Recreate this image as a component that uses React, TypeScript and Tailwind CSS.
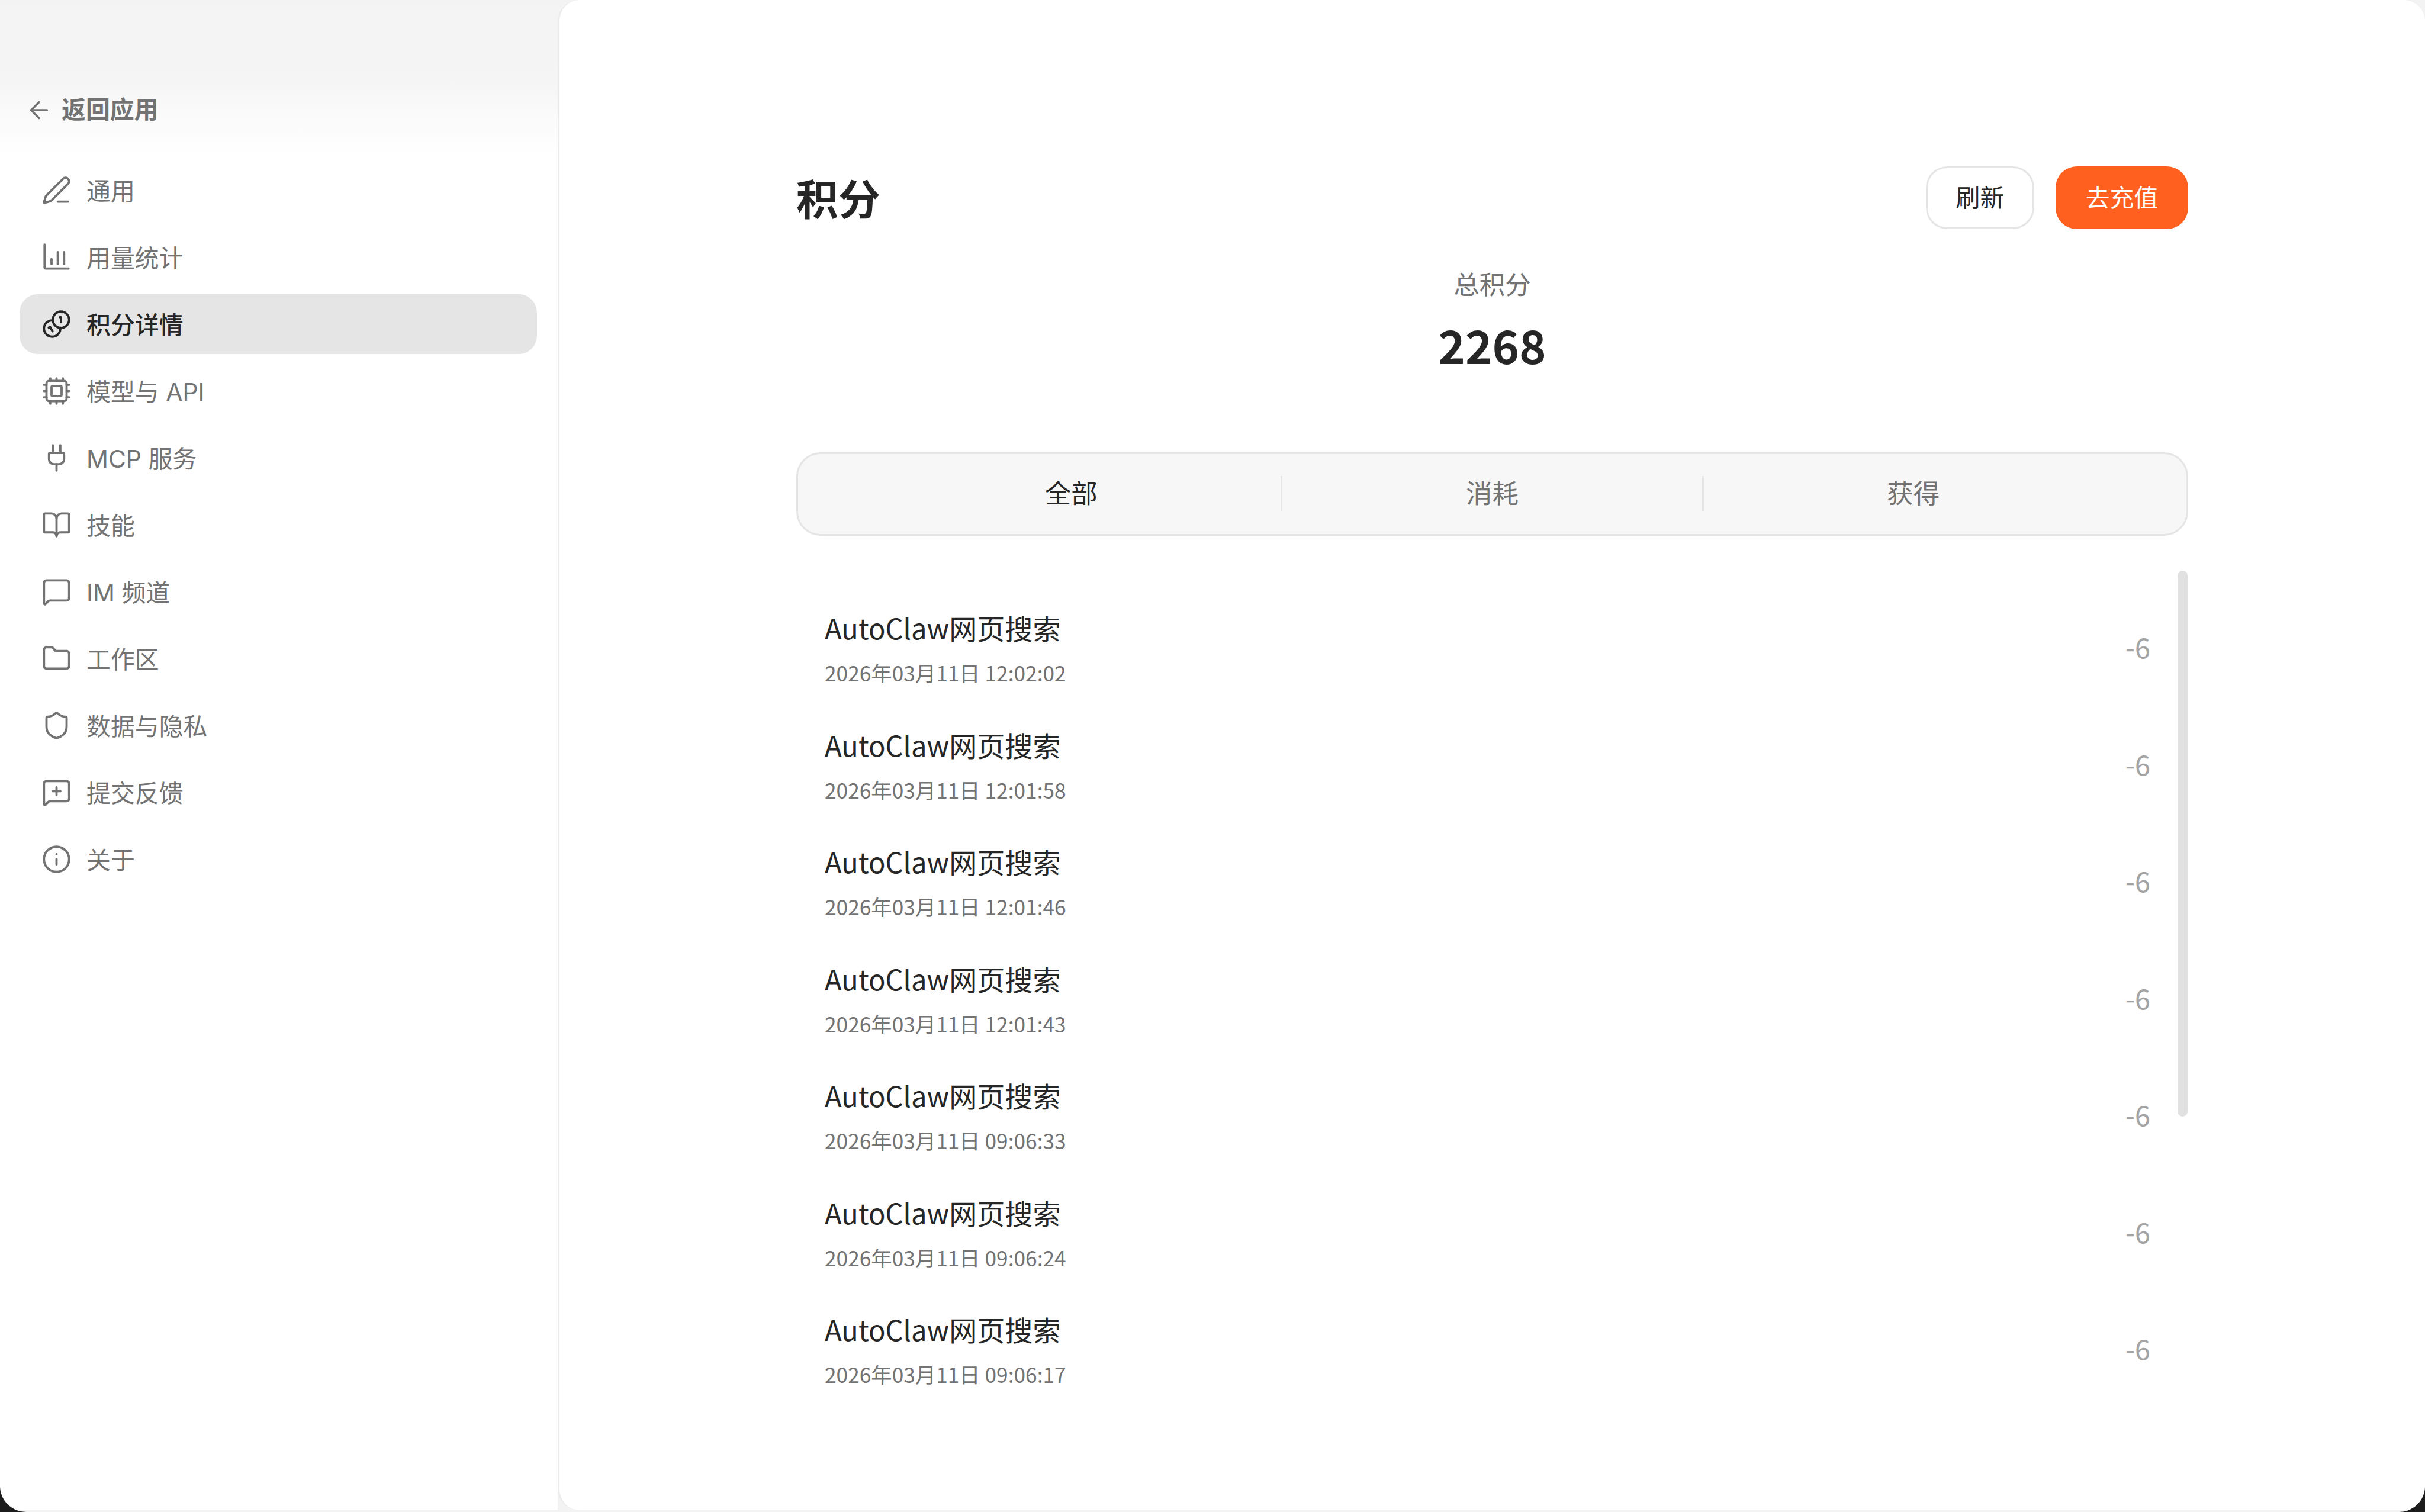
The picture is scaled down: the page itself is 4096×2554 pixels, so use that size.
import React from "react";
import { ArrowLeft, PenLine, Cpu, Plug, BookOpen, MessageSquare, Folder, Shield, MessageSquarePlus, Info } from "lucide-react";

type IconProps = { className?: string; strokeWidth?: number };

function UsageIcon({ className, strokeWidth }: IconProps) {
  return (
    <svg className={className} viewBox="0 0 24 24" fill="none" stroke="currentColor" strokeWidth={strokeWidth} strokeLinecap="round" strokeLinejoin="round">
      <path d="M2.5 2v18a1 1 0 0 0 1 1h18" />
      <path d="M8 17.5v-4" />
      <path d="M13 17.5V8" />
      <path d="M18 17.5V8" />
    </svg>
  );
}

function CoinsIcon({ className, strokeWidth }: IconProps) {
  return (
    <svg className={className} viewBox="0 0 24 24" fill="none" stroke="currentColor" strokeWidth={strokeWidth} strokeLinecap="round" strokeLinejoin="round">
      <circle cx="15.5" cy="8.5" r="6.5" />
      <path d="M14.5 6.5h1v4" />
      <path d="M9.2 9.04A6.5 6.5 0 1 0 14.96 14.8" />
      <path d="m5.8 14.8 1-.6 2 3.5" />
    </svg>
  );
}

const nav = [
  { label: "通用", Icon: PenLine },
  { label: "用量统计", Icon: UsageIcon },
  { label: "积分详情", Icon: CoinsIcon, active: true },
  { label: "模型与 API", Icon: Cpu },
  { label: "MCP 服务", Icon: Plug },
  { label: "技能", Icon: BookOpen },
  { label: "IM 频道", Icon: MessageSquare },
  { label: "工作区", Icon: Folder },
  { label: "数据与隐私", Icon: Shield },
  { label: "提交反馈", Icon: MessageSquarePlus },
  { label: "关于", Icon: Info },
];

const times = ["12:02:02", "12:01:58", "12:01:46", "12:01:43", "09:06:33", "09:06:24", "09:06:17"];

export default function App() {
  return (
    <div className="w-screen h-screen overflow-hidden bg-[#1c1c1c] [font-family:Inter,'Noto_Sans_CJK_SC',sans-serif]">
      <div className="flex h-full w-full rounded-b-[44px] bg-[#f3f3f3] overflow-hidden">
        <aside className="flex w-[942px] shrink-0 flex-col rounded-bl-[40px] bg-white mb-[3px] overflow-hidden">
          <div className="flex h-[262px] items-start bg-gradient-to-b from-[#f3f3f3] via-[#f5f5f5] to-white pl-[43px] pt-[159px]">
            <div className="flex h-[53px] items-center gap-[15px] text-[#737373]">
              <ArrowLeft className="h-[46px] w-[46px]" strokeWidth={1.8} />
              <span className="text-[40.9px] font-semibold">返回应用</span>
            </div>
          </div>
          <nav className="flex flex-col gap-[12px] pl-[33px] pr-[35px] pt-[9px]">
            {nav.map(({ label, Icon, active }) => (
              <div
                key={label}
                className={`flex h-[101px] items-center gap-[25px] rounded-[31px] pl-[37px] text-[40.9px] ${active ? "bg-[#e5e5e5] text-[#262626] font-medium" : "text-[#737373]"}`}
              >
                <Icon className="h-[51px] w-[51px] shrink-0" strokeWidth={1.8} />
                <span className="pt-[4px]">{label}</span>
              </div>
            ))}
          </nav>
        </aside>
        <main className="mb-[3px] flex min-w-0 flex-1 flex-col rounded-[36px] border-l-[3px] border-[#ebebeb] bg-white pl-[400px] pr-[400px] pt-[281px] [font-family:'Noto_Sans_CJK_SC',sans-serif]">
          <div className="flex items-center justify-between">
            <h1 className="pb-[4px] text-[71px] font-bold leading-[102px] text-[#262626]">积分</h1>
            <div className="flex gap-[36px]">
              <button className="flex h-[106px] w-[183px] items-center justify-center rounded-[36px] border-[3px] border-[#e5e5e5] bg-white pb-[4px] text-[40.9px] text-[#262626]">刷新</button>
              <button className="flex h-[106px] w-[224px] items-center justify-center rounded-[36px] bg-[#ff5f1f] pb-[4px] text-[40.9px] text-white">去充值</button>
            </div>
          </div>
          <div className="mt-[61px] flex flex-col items-center">
            <div className="text-[43.5px] leading-[61px] text-[#737373]">总积分</div>
            <div className="mt-[11px] text-[77.3px] font-bold leading-[122px] text-[#262626]">2268</div>
          </div>
          <div className="mt-[122px] flex h-[141px] items-center rounded-[41px] border-[3px] border-[#e5e5e5] bg-[#f7f7f7] px-[107px] pb-[2px]">
            <div className="flex h-[60px] flex-1 items-center justify-center border-r-[3px] border-[#e5e5e5] pb-[4px] text-[44.5px] text-[#262626]">全部</div>
            <div className="flex h-[60px] flex-1 items-center justify-center border-r-[3px] border-[#e5e5e5] pb-[4px] text-[44.5px] text-[#737373]">消耗</div>
            <div className="flex h-[60px] flex-1 items-center justify-center pb-[4px] text-[44.5px] text-[#737373]">获得</div>
          </div>
          <div className="relative mt-[59px] flex-1 pt-[61px]">
            <div className="absolute right-[1px] top-0 h-[922px] w-[17px] rounded-full bg-[#e1e1e1]" />
            {times.map((t) => (
              <div key={t} className="flex h-[197.5px] items-start justify-between pl-[48px] pr-[64px]">
                <div>
                  <div className="text-[47.1px] font-normal leading-[69px] text-[#262626]">AutoClaw网页搜索</div>
                  <div className="mt-[15px] text-[35.3px] font-normal leading-[54px] text-[#737373]">2026年03月11日 {t}</div>
                </div>
                <div className="mt-[32px] text-[46.8px] font-normal leading-[69px] text-[#a3a3a3]">-6</div>
              </div>
            ))}
          </div>
        </main>
      </div>
    </div>
  );
}
